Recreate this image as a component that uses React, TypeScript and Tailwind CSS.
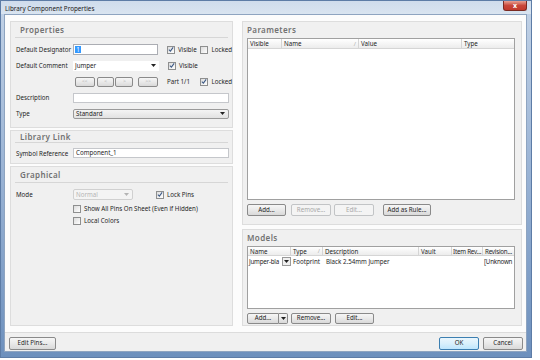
import type { ReactNode } from 'react';

function Check({ checked, label, className = '' }: { checked?: boolean; label: string; className?: string }) {
  return (
    <div className={`flex items-center gap-[3px] ${className}`}>
      <span className="w-[8px] h-[8px] shrink-0 border border-[#8e8f8f] bg-gradient-to-br from-[#dcdcdc] to-white flex items-center justify-center">
        {checked && (
          <svg width="7" height="7" viewBox="0 0 7 7">
            <path d="M1 3.6 L2.8 5.4 L6 1" fill="none" stroke="#3d5a86" strokeWidth="1.2" />
          </svg>
        )}
      </span>
      <span className="whitespace-nowrap leading-[9px]">{label}</span>
    </div>
  );
}

function Btn({ children, className = '', disabled }: { children?: ReactNode; className?: string; disabled?: boolean }) {
  return (
    <div
      className={`flex items-center justify-center rounded-[2px] border whitespace-nowrap ${
        disabled
          ? 'border-[#c2c4c6] bg-[#f4f4f4] text-[#a8a8a8]'
          : 'border-[#8a8a8a] bg-gradient-to-b from-[#f6f6f6] via-[#e9e9e9] to-[#d9d9d9] text-[#1e1e1e]'
      } ${className}`}
    >
      {children}
    </div>
  );
}

function Arrow({ color = '#222' }: { color?: string }) {
  return (
    <svg width="5" height="3" viewBox="0 0 5 3">
      <path d="M0 0 H5 L2.5 3 Z" fill={color} />
    </svg>
  );
}

function Header({ title, line = true, className = '' }: { title: string; line?: boolean; className?: string }) {
  return (
    <div
      className={`flex items-center pl-[5px] text-[8px] font-semibold tracking-[0.4px] text-[#727272] ${
        line ? 'border-b border-[#d6d6d6] mx-[4px] pl-[1px]' : ''
      } ${className}`}
    >
      {title}
    </div>
  );
}

function Label({ children }: { children: ReactNode }) {
  return <div className="w-[57px] shrink-0 whitespace-nowrap leading-[9px]">{children}</div>;
}

function Th({ children, className = '', sort }: { children?: ReactNode; className?: string; sort?: boolean }) {
  return (
    <div className={`flex items-center justify-between pl-[2px] pr-[2px] border-r border-[#d5d5d5] shrink-0 ${className}`}>
      <span className="whitespace-nowrap leading-[9px]">{children}</span>
      {sort && <span className="text-[6px] text-[#b0b0b0] leading-[8px]">/</span>}
    </div>
  );
}

export default function App() {
  return (
    <div className="w-[540px] h-[360px] bg-white font-['Noto_Sans',sans-serif] text-[6.2px] text-[#1e1e1e] leading-none">
      <div className="w-[532px] h-[358px] flex flex-col bg-gradient-to-b from-[#c3d3e7] via-[#98b2d4] to-[#6d90bd] border border-[#5d7ca6]">
        {/* title bar */}
        <div className="h-[13px] shrink-0 flex items-start justify-between bg-gradient-to-b from-[#cfdcec] to-[#d9e4f0]">
          <span className="pl-[4px] pt-[4px] text-[6.3px] text-[#1a1a1a] leading-[7px]">Library Component Properties</span>
          <div className="mr-[4px] w-[24px] h-[10px] rounded-b-[3px] border border-t-0 border-[#7a2a22] bg-gradient-to-b from-[#e8a093] via-[#c8473a] to-[#c2392b] flex items-center justify-center text-white text-[7px] font-bold">
            x
          </div>
        </div>

        {/* client area */}
        <div className="flex-1 ml-[3px] mr-[4px] mb-[5px] flex flex-col bg-[#fcfcfc] border border-[#8ea4c0]">
          <div className="flex-1 flex gap-[9px] pl-[5px] pr-[4px] pt-[6px]">
            {/* left column */}
            <div className="w-[223px] flex flex-col gap-[2px]">
              <div className="h-[107px] bg-[#f0f0f0] border border-[#dddddd] flex flex-col">
                <Header title="Properties" className="h-[16px]" />
                <div className="flex flex-col gap-[5px] pl-[5px] pt-[6px]">
                  <div className="h-[11px] flex items-center">
                    <Label>Default Designator</Label>
                    <div className="w-[86px] h-[11px] bg-white border border-[#abadb3] flex items-center pl-[1px]">
                      <span className="bg-[#3399ff] text-white w-[6px] h-[7px] flex items-center justify-center leading-[7px]">1</span>
                    </div>
                    <Check checked label="Visible" className="ml-[9px] w-[34px]" />
                    <Check label="Locked" />
                  </div>
                  <div className="h-[11px] flex items-center">
                    <Label>Default Comment</Label>
                    <div className="w-[86px] h-[10px] bg-white flex items-center justify-between pl-[2px] pr-[3px]">
                      <span className="leading-[9px]">Jumper</span>
                      <Arrow />
                    </div>
                    <Check checked label="Visible" className="ml-[9px]" />
                  </div>
                  <div className="h-[11px] flex items-center">
                    <div className="w-[59px] shrink-0" />
                    <Btn className="w-[20px] h-[10px] text-[#b0b0b0] text-[5px]">&lt;&lt;</Btn>
                    <Btn className="w-[18px] h-[10px] ml-[2px] text-[#b0b0b0] text-[5px]">&lt;</Btn>
                    <Btn className="w-[18px] h-[10px] ml-[1px] text-[#b0b0b0] text-[5px]">&gt;</Btn>
                    <Btn className="w-[20px] h-[10px] ml-[5px] text-[#b0b0b0] text-[5px]">&gt;&gt;</Btn>
                    <span className="ml-[9px] w-[34px] leading-[9px]">Part 1/1</span>
                    <Check checked label="Locked" />
                  </div>
                  <div className="h-[11px] flex items-center">
                    <Label>Description</Label>
                    <div className="w-[156px] h-[10px] bg-white border border-[#c5c7cb]" />
                  </div>
                  <div className="h-[11px] flex items-center">
                    <Label>Type</Label>
                    <div className="w-[156px] h-[10px] bg-gradient-to-b from-[#f4f4f4] to-[#e2e2e2] border border-[#9a9a9a] rounded-[2px] flex items-center justify-between pl-[2px] pr-[3px]">
                      <span className="leading-[8px]">Standard</span>
                      <Arrow />
                    </div>
                  </div>
                </div>
              </div>

              <div className="h-[34px] bg-[#f0f0f0] border border-[#dddddd] flex flex-col">
                <Header title="Library Link" className="h-[12px]" />
                <div className="flex items-center pl-[5px] pt-[5px]">
                  <Label>Symbol Reference</Label>
                  <div className="w-[156px] h-[10px] bg-white border border-[#c5c7cb] flex items-center pl-[2px] leading-[8px]">Component_1</div>
                </div>
              </div>

              <div className="flex-1 bg-[#f0f0f0] border border-[#dddddd] flex flex-col">
                <Header title="Graphical" className="h-[16px]" />
                <div className="flex flex-col pl-[5px] pt-[6px]">
                  <div className="h-[11px] flex items-center">
                    <Label>Mode</Label>
                    <div className="w-[60px] h-[11px] bg-[#f4f4f4] border border-[#d0d0d0] rounded-[2px] flex items-center justify-between pl-[2px] pr-[3px] text-[#b4b4b4]">
                      <span className="leading-[9px]">Normal</span>
                      <Arrow color="#b4b4b4" />
                    </div>
                    <Check checked label="Lock Pins" className="ml-[23px]" />
                  </div>
                  <Check label="Show All Pins On Sheet (Even if Hidden)" className="ml-[57px] mt-[4px]" />
                  <Check label="Local Colors" className="ml-[57px] mt-[3px]" />
                </div>
              </div>
            </div>

            {/* right column */}
            <div className="w-[280px] flex flex-col gap-[4px]">
              <div className="h-[204px] bg-[#f0f0f0] border border-[#dddddd] flex flex-col pl-[4px] pr-[6px]">
                <Header title="Parameters" line={false} className="h-[16px] !pl-0" />
                <div className="h-[162px] bg-white border border-[#a0a0a0] flex flex-col">
                  <div className="h-[10px] flex bg-gradient-to-b from-[#ffffff] to-[#ececec] border-b border-[#d5d5d5]">
                    <Th className="w-[34px]">Visible</Th>
                    <Th className="w-[77px]" sort>Name</Th>
                    <Th className="w-[103px]">Value</Th>
                    <Th className="flex-1 border-r-0">Type</Th>
                  </div>
                </div>
                <div className="flex items-center mt-[4px]">
                  <Btn className="w-[39px] h-[12px]">Add...</Btn>
                  <Btn disabled className="w-[40px] h-[12px] ml-[5px]">Remove...</Btn>
                  <Btn disabled className="w-[40px] h-[12px] ml-[3px]">Edit...</Btn>
                  <Btn className="w-[48px] h-[12px] ml-[9px]">Add as Rule...</Btn>
                </div>
              </div>

              <div className="flex-1 bg-[#f0f0f0] border border-[#dddddd] flex flex-col pl-[4px] pr-[6px]">
                <Header title="Models" line={false} className="h-[16px] !pl-0" />
                <div className="h-[63px] bg-white border border-[#a0a0a0] flex flex-col">
                  <div className="h-[9px] flex bg-gradient-to-b from-[#ffffff] to-[#ececec] border-b border-[#d5d5d5]">
                    <Th className="w-[43px]">Name</Th>
                    <Th className="w-[32px]" sort>Type</Th>
                    <Th className="w-[96px]">Description</Th>
                    <Th className="w-[33px]">Vault</Th>
                    <Th className="w-[31px] !pl-[1px] tracking-[-0.2px]">Item Rev...</Th>
                    <Th className="flex-1 border-r-0 tracking-[-0.2px]">Revision...</Th>
                  </div>
                  <div className="h-[10px] flex items-center">
                    <div className="w-[43px] flex items-center justify-between pl-[1px]">
                      <span className="whitespace-nowrap tracking-[-0.2px] leading-[9px]">Jumper-bla</span>
                      <span className="w-[9px] h-[9px] border border-[#9a9a9a] bg-[#f0f0f0] flex items-center justify-center shrink-0">
                        <Arrow />
                      </span>
                    </div>
                    <span className="w-[32px] pl-[2px] leading-[9px]">Footprint</span>
                    <span className="w-[96px] pl-[3px] leading-[9px]">Black 2.54mm Jumper</span>
                    <span className="w-[33px]" />
                    <span className="w-[31px]" />
                    <span className="pl-[1px] whitespace-nowrap leading-[9px] tracking-[-0.2px]">[Unknown</span>
                  </div>
                </div>
                <div className="flex items-center mt-[4px]">
                  <Btn className="w-[32px] h-[11px] rounded-r-none">Add...</Btn>
                  <Btn className="w-[9px] h-[11px] rounded-l-none border-l-0">
                    <Arrow />
                  </Btn>
                  <Btn className="w-[40px] h-[11px] ml-[3px]">Remove...</Btn>
                  <Btn className="w-[39px] h-[11px] ml-[4px]">Edit...</Btn>
                </div>
              </div>
            </div>
          </div>

          {/* bottom bar */}
          <div className="h-[19px] shrink-0 mt-[6px] border-t border-[#dcdcdc] bg-[#f0f0f0] flex items-start justify-between pl-[4px] pr-[3px] pt-[4px]">
            <Btn className="w-[47px] h-[13px]">Edit Pins...</Btn>
            <div className="flex gap-[4px]">
              <Btn className="w-[40px] h-[13px] !border-[#3c7fb1] !from-[#eaf6fd] !via-[#d9f0fc] !to-[#bee6fd]">OK</Btn>
              <Btn className="w-[40px] h-[13px]">Cancel</Btn>
            </div>
          </div>
        </div>
      </div>
    </div>
  );
}
